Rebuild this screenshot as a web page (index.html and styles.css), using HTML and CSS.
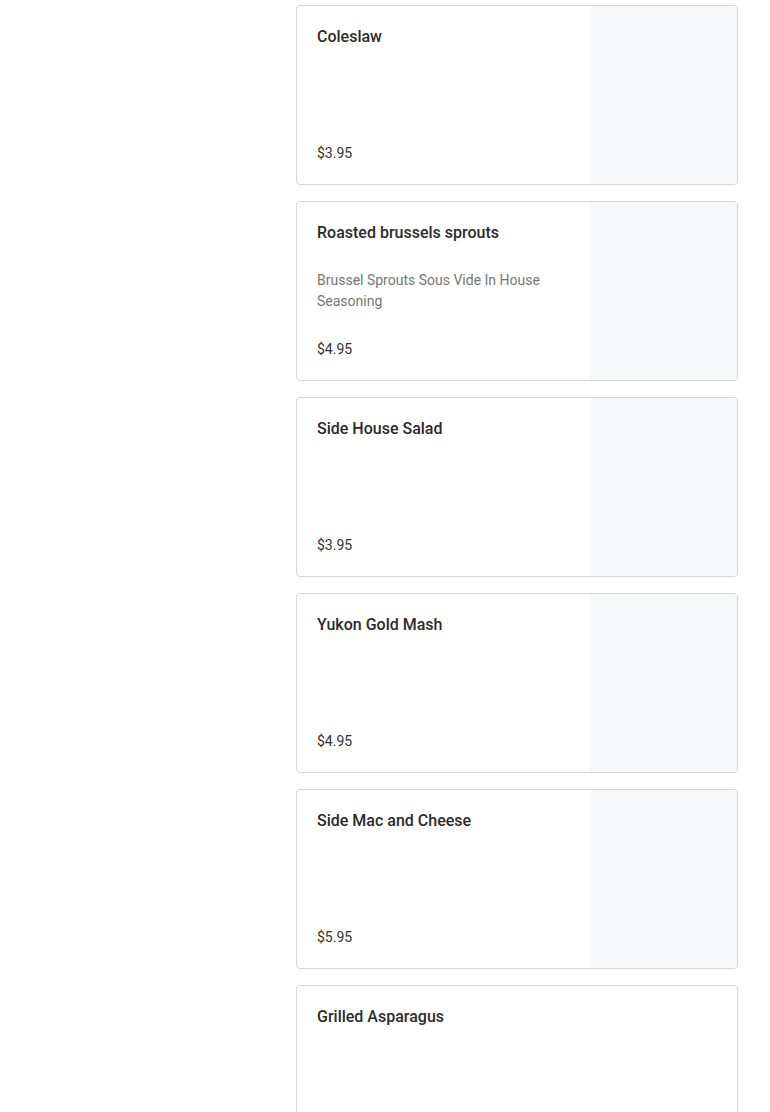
FILE: index.html
```html
<!DOCTYPE html>
<html>
<head>
<meta charset="utf-8">
<link rel="stylesheet" href="styles.css">
</head>
<body>
<div class="page">
  <aside class="sidebar"></aside>
  <main class="menu">
    <div class="card">
      <div class="info">
        <div class="title">Coleslaw</div>
        <div class="price">$3.95</div>
      </div>
      <div class="thumb"></div>
    </div>
    <div class="card">
      <div class="info">
        <div class="title">Roasted brussels sprouts</div>
        <div class="desc">Brussel Sprouts Sous Vide In House Seasoning</div>
        <div class="price">$4.95</div>
      </div>
      <div class="thumb"></div>
    </div>
    <div class="card">
      <div class="info">
        <div class="title">Side House Salad</div>
        <div class="price">$3.95</div>
      </div>
      <div class="thumb"></div>
    </div>
    <div class="card">
      <div class="info">
        <div class="title">Yukon Gold Mash</div>
        <div class="price">$4.95</div>
      </div>
      <div class="thumb"></div>
    </div>
    <div class="card">
      <div class="info">
        <div class="title">Side Mac and Cheese</div>
        <div class="price">$5.95</div>
      </div>
      <div class="thumb"></div>
    </div>
    <div class="card">
      <div class="info">
        <div class="title">Grilled Asparagus</div>
        <div class="price">$4.95</div>
      </div>
    </div>
  </main>
</div>
</body>
</html>
```
FILE: styles.css
```css
html, body {
  margin: 0;
  padding: 0;
  background: #ffffff;
  font-family: Roboto, "Liberation Sans", Arial, sans-serif;
}
.page {
  display: grid;
  grid-template-columns: 296px 442px;
  padding-top: 5px;
}
.menu {
  display: flex;
  flex-direction: column;
  gap: 16px;
}
.card {
  display: flex;
  height: 180px;
  box-sizing: border-box;
  border: 1px solid #d6d6d6;
  border-radius: 4px;
  overflow: hidden;
  background: #fff;
}
.info {
  flex: 1;
  display: flex;
  flex-direction: column;
  padding: 20px;
}
.title {
  font-size: 16px;
  font-weight: 500;
  line-height: 22px;
  color: #2b2b2b;
}
.desc {
  margin-top: 26px;
  font-size: 14px;
  line-height: 21px;
  color: #767676;
  padding-right: 24px;
}
.price {
  margin-top: auto;
  font-size: 14px;
  line-height: 21px;
  color: #333333;
}
.thumb {
  width: 147px;
  flex: none;
  background: #f7f8fa;
}
```
